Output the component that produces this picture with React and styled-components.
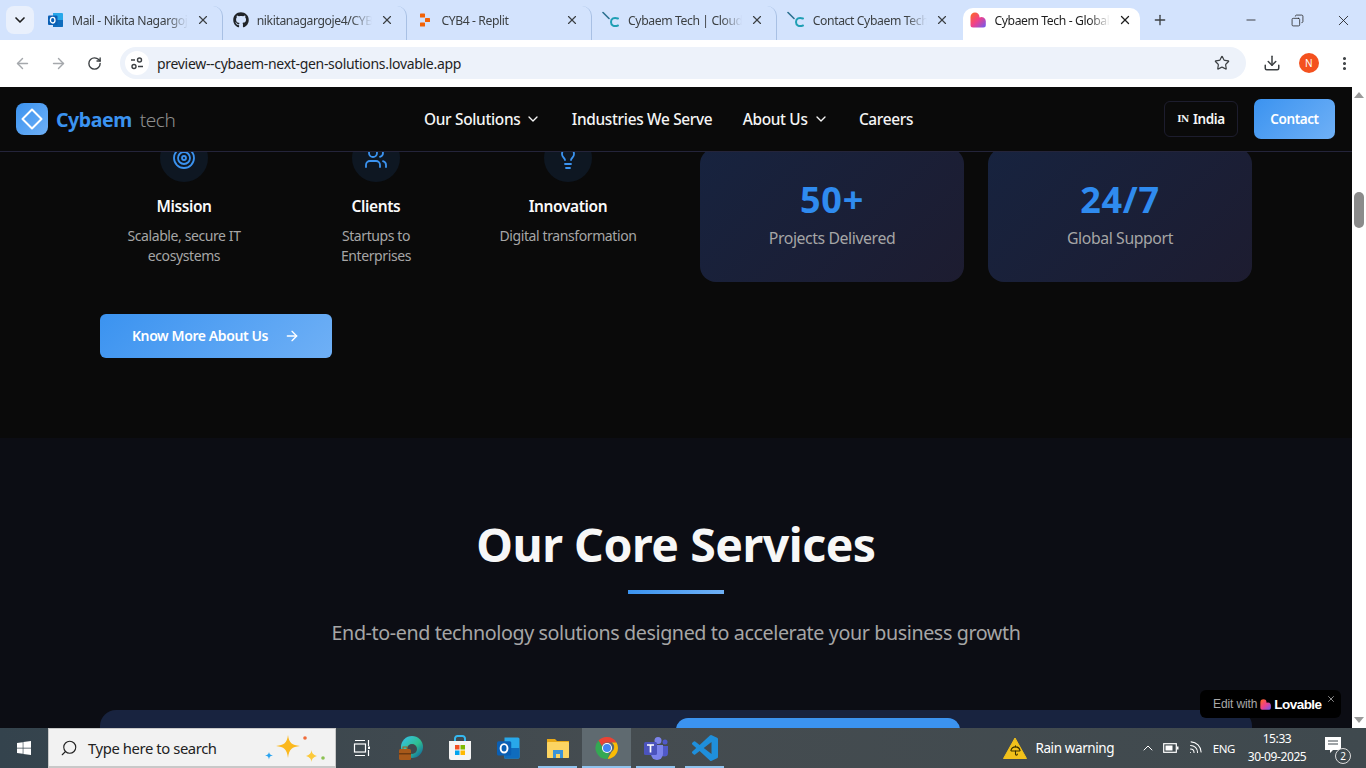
import React from 'react';
import styled, { createGlobalStyle } from 'styled-components';
import {
  ArrowLeft, ArrowRight, ChevronDown, ChevronUp, Copy, Download, Lightbulb, Minus,
  MoreVertical, Plus, RotateCw, Search, Star, Target, Umbrella, Users, Wifi, X,
} from 'lucide-react';
import { FaGithub, FaWindows } from 'react-icons/fa';

const SANS = '"Noto Sans", "Open Sans", sans-serif';

const GlobalStyle = createGlobalStyle`
  html, body { margin: 0; padding: 0; background: #0a0a0a; }
  body { font-family: ${SANS}; letter-spacing: -0.025em; }
  * { box-sizing: border-box; }
`;

const Screen = styled.div`
  width: 1366px;
  height: 768px;
  display: flex;
  flex-direction: column;
  overflow: hidden;
`;

/* browser chrome */
const TabStrip = styled.div`
  height: 40px;
  flex-shrink: 0;
  background: #d3e3fd;
  display: flex;
  align-items: flex-end;
  padding-left: 6px;
  color: #1f1f1f;
`;

const TabMenu = styled.div`
  width: 28px;
  height: 28px;
  margin: 0 4px 6px 0;
  border-radius: 8px;
  background: #e9f0fc;
  display: flex;
  align-items: center;
  justify-content: center;
`;

const Tab = styled.div`
  width: ${p => p.$active ? '177px' : '184.7px'};
  height: ${p => p.$active ? '32px' : '34px'};
  padding: ${p => p.$active ? '0 8px 8px 7px' : '0 12px 6px 10px'};
  margin: ${p => p.$active ? '0 0 0 2px' : '0'};
  border-radius: 10px 10px 0 0;
  background: ${p => p.$active ? '#fff' : 'transparent'};
  display: flex;
  align-items: center;
  gap: 8px;
  border-right: ${p => p.$sep ? '1px solid #a8c0e4' : 'none'};
`;

const TabTitle = styled.span`
  flex: 1;
  font-size: 12.2px;
  white-space: nowrap;
  overflow: hidden;
  color: ${p => p.$active ? '#1f1f1f' : '#3c4043'};
  mask-image: linear-gradient(to right, #000 82%, transparent 100%);
`;

const NewTab = styled.div`
  width: 40px;
  height: 34px;
  padding-bottom: 6px;
  display: flex;
  align-items: center;
  justify-content: center;
`;

const WindowButtons = styled.div`
  margin-left: auto;
  height: 40px;
  display: flex;
  align-items: center;
`;

const WindowButton = styled.div`
  width: 46px;
  display: flex;
  justify-content: center;
`;

const Toolbar = styled.div`
  height: 47px;
  flex-shrink: 0;
  background: #fff;
  display: flex;
  align-items: center;
  padding: 0 13px 1px 4px;
`;

const NavIcon = styled.div`
  width: 36px;
  display: flex;
  justify-content: center;
  color: ${p => p.$dim ? '#a5a8ac' : '#3c4043'};
`;

const AddressBar = styled.div`
  width: 1126px;
  height: 32px;
  margin: 0 8px 0 8px;
  padding: 0 16px 0 5px;
  border-radius: 16px;
  background: #edf2fa;
  display: flex;
  align-items: center;
  font-size: 14px;
  letter-spacing: -0.022em;
  color: #1f1f1f;
`;

const SiteInfo = styled.div`
  width: 24px;
  height: 24px;
  margin-right: 8px;
  border-radius: 50%;
  background: #fff;
  display: flex;
  align-items: center;
  justify-content: center;
`;

const Avatar = styled.div`
  width: 20px;
  height: 20px;
  border-radius: 50%;
  background: #f4511e;
  color: #fff;
  font-size: 10px;
  display: flex;
  align-items: center;
  justify-content: center;
`;

const ToolIcons = styled.div`
  flex: 1;
  display: flex;
  align-items: center;
  justify-content: space-between;
  padding: 0 0 0 9px;
  color: #3c4043;
`;

/* page */
const Viewport = styled.div`
  flex: 1;
  min-height: 0;
  display: flex;
`;

const Page = styled.div`
  flex: 1;
  min-width: 0;
  display: flex;
  flex-direction: column;
  position: relative;
`;

const Navbar = styled.header`
  height: 65px;
  flex-shrink: 0;
  background: #0a0a0a;
  border-bottom: 1px solid #24243a;
  display: flex;
  align-items: center;
  padding: 0 17px 0 16px;
`;

const Brand = styled.div`
  width: 408px;
  display: flex;
  align-items: center;
  gap: 8px;
`;

const LogoMark = styled.div`
  width: 32px;
  height: 32px;
  border-radius: 8px;
  background: linear-gradient(135deg, #3b93f0, #6fb0f6);
  display: flex;
  align-items: center;
  justify-content: center;
`;

const BrandName = styled.span`
  font-size: 19.5px;
  font-weight: 700;
  color: #3b93f0;
`;

const BrandSuffix = styled.span`
  font-size: 19px;
  font-weight: 300;
  color: #8f8f8f;
  margin-left: 4px;
`;

const NavLinks = styled.nav`
  display: flex;
  align-items: center;
  gap: 30.3px;
`;

const NavLink = styled.span`
  display: flex;
  align-items: center;
  gap: 5px;
  font-size: 15.4px;
  font-weight: 500;
  letter-spacing: -0.02em;
  color: #f5f5f5;
`;

const NavActions = styled.div`
  margin-left: auto;
  display: flex;
  align-items: center;
  gap: 16px;
`;

const RegionButton = styled.div`
  width: 74px;
  height: 36px;
  border: 1px solid #1d1d2e;
  border-radius: 6px;
  display: flex;
  align-items: center;
  justify-content: center;
  gap: 4px;
  color: #f5f5f5;
  font-size: 13.5px;
  font-weight: 600;
`;

const RegionCode = styled.span`
  font-family: "DejaVu Serif", serif;
  font-size: 9px;
  font-weight: 700;
`;

const ContactButton = styled.div`
  width: 81px;
  height: 40px;
  border-radius: 7px;
  background: linear-gradient(135deg, #3b93f0, #6fb0f6);
  color: #fff;
  font-size: 13.5px;
  font-weight: 600;
  display: flex;
  align-items: center;
  justify-content: center;
`;

const Scroller = styled.main`
  flex: 1;
  min-height: 0;
  overflow: hidden;
`;

const AboutSection = styled.section`
  margin-top: -18px;
  padding: 0 100px 80px;
  background: #0a0a0a;
`;

const AboutGrid = styled.div`
  display: grid;
  grid-template-columns: 1fr 1fr;
  gap: 48px;
`;

const Features = styled.div`
  display: grid;
  grid-template-columns: repeat(3, 1fr);
  gap: 24px;
`;

const Feature = styled.div`
  display: flex;
  flex-direction: column;
  align-items: center;
  text-align: center;
`;

const FeatureIcon = styled.div`
  width: 48px;
  height: 48px;
  border-radius: 50%;
  background: #0e1722;
  color: #3b93f0;
  display: flex;
  align-items: center;
  justify-content: center;
`;

const FeatureTitle = styled.h3`
  margin: 12px 0 8px;
  font-size: 15.5px;
  line-height: 24px;
  font-weight: 600;
  color: #fafafa;
`;

const FeatureText = styled.p`
  margin: 0;
  font-size: 14px;
  line-height: 20px;
  color: #a6a6a6;
`;

const Stats = styled.div`
  padding-top: 14px;
  display: grid;
  grid-template-columns: 1fr 1fr;
  gap: 24px;
`;

const StatCard = styled.div`
  height: 134px;
  border-radius: 16px;
  background: linear-gradient(135deg, #17233f, #1d1c30);
  display: flex;
  flex-direction: column;
  align-items: center;
  padding-top: 30px;
`;

const StatValue = styled.div`
  font-size: 36px;
  line-height: 44px;
  font-weight: 700;
  color: #2f8bef;
  letter-spacing: 0.02em;
`;

const StatLabel = styled.div`
  margin-top: 4px;
  font-size: 15.8px;
  line-height: 24px;
  color: #a6a6a6;
`;

const MoreButton = styled.div`
  margin-top: 32px;
  width: 232px;
  height: 44px;
  padding-bottom: 1px;
  border-radius: 6px;
  background: linear-gradient(135deg, #3b93f0, #6fb0f6);
  color: #fff;
  font-size: 14px;
  font-weight: 600;
  display: flex;
  align-items: center;
  justify-content: center;
  gap: 16px;
`;

const ServicesSection = styled.section`
  background: #0c0d14;
  padding: 78px 100px 40px;
  display: flex;
  flex-direction: column;
  align-items: center;
`;

const SectionTitle = styled.h2`
  margin: 0;
  font-size: 46.4px;
  line-height: 56px;
  font-weight: 700;
  color: #f7f7f7;
  letter-spacing: -0.01em;
`;

const TitleRule = styled.div`
  width: 96px;
  height: 4px;
  margin-top: 18px;
  background: linear-gradient(90deg, #3b93f0, #6fb0f6);
`;

const SectionLead = styled.p`
  margin: 25px 0 0;
  font-size: 19.72px;
  line-height: 28px;
  color: #a6a6a6;
`;

const ServiceTabs = styled.div`
  margin-top: 63px;
  width: 100%;
  padding: 8px;
  border-radius: 16px;
  background: #18233f;
  display: grid;
  grid-template-columns: repeat(4, 1fr);
`;

const ServiceTab = styled.div`
  height: 56px;
  border-radius: 12px;
  background: ${p => p.$active ? '#3b93f0' : 'transparent'};
`;

const LovableBadge = styled.div`
  position: absolute;
  right: 11px;
  bottom: 10px;
  width: 141px;
  height: 28px;
  border-radius: 6px;
  background: #000;
  display: flex;
  align-items: center;
  padding-left: 13px;
  gap: 3px;
  font-family: "Liberation Sans", sans-serif;
  letter-spacing: -0.01em;
  font-size: 12px;
  color: #a8a8a8;
`;

const LovableName = styled.span`
  font-size: 13.5px;
  font-weight: 700;
  color: #fff;
  letter-spacing: -0.04em;
`;

const BadgeClose = styled.span`
  position: absolute;
  top: 4px;
  right: 5px;
  display: flex;
  color: #a8a8a8;
`;

const Scrollbar = styled.div`
  width: 14px;
  flex-shrink: 0;
  background: #fff;
  display: flex;
  flex-direction: column;
  align-items: center;
  padding: 5px 0;
`;

const ScrollThumb = styled.div`
  width: 10px;
  height: 36px;
  margin-top: 94px;
  border-radius: 5px;
  background: #8b8b8b;
`;

const ScrollArrow = styled.div`
  width: 0;
  height: 0;
  border-left: 5px solid transparent;
  border-right: 5px solid transparent;
  ${p => p.$down
    ? 'border-top: 6px solid #9a9a9a; margin-top: auto;'
    : 'border-bottom: 6px solid #9a9a9a;'}
`;

/* windows taskbar */
const Taskbar = styled.footer`
  height: 40px;
  flex-shrink: 0;
  background: linear-gradient(90deg, #34434d, #454c50 45%, #3f494e);
  display: flex;
  align-items: center;
  color: #fff;
`;

const StartButton = styled.div`
  width: 48px;
  display: flex;
  justify-content: center;
`;

const SearchBox = styled.div`
  width: 288px;
  height: 40px;
  background: #f2f2f2;
  border: 1px solid #c8c8c8;
  border-bottom-width: 2px;
  display: flex;
  align-items: center;
  padding-left: 11px;
  gap: 10px;
  color: #222;
  font-size: 14.8px;
`;

const SearchArt = styled.div`
  margin-left: auto;
  margin-right: 8px;
  display: flex;
`;

const TaskIcons = styled.div`
  display: flex;
  margin-left: 1px;
`;

const TaskIcon = styled.div`
  width: 49px;
  height: 40px;
  display: flex;
  align-items: center;
  justify-content: center;
  position: relative;
  background: ${p => p.$active ? '#5f6a70' : 'transparent'};

  &::after {
    content: '';
    position: absolute;
    left: ${p => p.$active ? '0' : '5px'};
    right: ${p => p.$active ? '0' : '5px'};
    bottom: 0;
    height: 2px;
    background: ${p => p.$open ? '#8fc3ee' : 'transparent'};
  }
`;

const Tray = styled.div`
  margin-left: auto;
  display: flex;
  align-items: center;
  height: 40px;
  padding-right: 18px;
`;

const Weather = styled.div`
  display: flex;
  align-items: center;
  gap: 8px;
  font-size: 13.5px;
  margin-right: 22px;
`;

const WarningIcon = styled.div`
  width: 24px;
  height: 22px;
  position: relative;
  display: flex;
  align-items: flex-end;
  justify-content: center;
  padding-bottom: 3px;
`;

const WarningShape = styled.svg`
  position: absolute;
  inset: 0;
`;

const TrayIcon = styled.div`
  width: 23.5px;
  display: flex;
  justify-content: center;
`;

const TrayText = styled.span`
  font-size: 11.5px;
  margin: 0 10px 0 6px;
`;

const Clock = styled.div`
  width: 64px;
  text-align: center;
  font-size: 12px;
  line-height: 18px;
`;

const Notice = styled.div`
  margin-left: 15px;
  width: 24px;
  height: 24px;
  position: relative;
`;

const NoticeCount = styled.span`
  position: absolute;
  right: -3px;
  bottom: -4px;
  width: 16px;
  height: 16px;
  border-radius: 50%;
  border: 1px solid #ddd;
  background: #3f494e;
  font-size: 10px;
  line-height: 14px;
  text-align: center;
`;

const OutlookIcon = ({ size = 16 }) => (
  <svg width={size} height={size} viewBox="0 0 16 16">
    <path d="M5 1h9a1 1 0 0 1 1 1v12a1 1 0 0 1-1 1H5z" fill="#28a8ea" />
    <path d="M5 8h10v6a1 1 0 0 1-1 1H5z" fill="#0f6cbd" />
    <rect x="0" y="3.5" width="9.5" height="9.5" rx="1" fill="#0a5fb4" />
    <ellipse cx="4.7" cy="8.2" rx="2.3" ry="2.8" fill="none" stroke="#fff" strokeWidth="1.3" />
  </svg>
);

const ReplitIcon = () => (
  <svg width="16" height="16" viewBox="0 0 16 16" fill="#f26207">
    <rect x="3" y="1.5" width="5" height="4" rx=".6" />
    <rect x="8" y="6" width="5" height="4" rx=".6" />
    <rect x="3" y="10.5" width="5" height="4" rx=".6" />
  </svg>
);

const CybaemIcon = () => (
  <svg width="18" height="18" viewBox="0 0 18 18" fill="none" strokeLinecap="round">
    <path d="M1 1.500l6 6" stroke="#2b6f8f" strokeWidth="1.6" />
    <path d="M16 7.500c-4-1.500-7 0-7 3.500s3 5 7 3.500" stroke="#1f9fb4" strokeWidth="2" />
  </svg>
);

const LovableIcon = ({ size = 16, id }) => (
  <svg width={size} height={size} viewBox="0 0 16 16">
    <defs>
      <linearGradient id={id} x1="0" y1="0" x2="1" y2="1">
        <stop offset="0" stopColor="#ff6a1f" />
        <stop offset=".5" stopColor="#f0408a" />
        <stop offset="1" stopColor="#6a5cf5" />
      </linearGradient>
    </defs>
    <path d="M5 .5a4.5 4.5 0 0 1 4.5 4.500v.6A4.200 4.200 0 0 1 15.800 9v4a2.500 2.500 0 0 1-2.500 2.500H3A2.500 2.500 0 0 1 .5 13V5A4.500 4.500 0 0 1 5 .5z" fill={`url(#${id})`} />
  </svg>
);

const SiteInfoIcon = () => (
  <svg width="14" height="14" viewBox="0 0 14 14" fill="none" stroke="#3c4043" strokeWidth="1.4">
    <path d="M1 4h4M8 10.500h5" />
    <circle cx="9.500" cy="4" r="2" />
    <circle cx="4" cy="10.500" r="2" />
  </svg>
);

const TaskViewIcon = () => (
  <svg width="18" height="18" viewBox="0 0 18 18" fill="none" stroke="#fff" strokeWidth="1.2">
    <path d="M2 1.500h10M2 16.500h10M15.500 1v6M15.500 11v6" />
    <rect x="1.500" y="5" width="11" height="8" />
    <rect x="15" y="7.500" width="2" height="2.500" fill="#fff" stroke="none" />
  </svg>
);

const EdgeIcon = () => (
  <svg width="26" height="26" viewBox="0 0 26 26">
    <defs>
      <linearGradient id="edge-a" x1="0" y1="0" x2="1" y2="1">
        <stop offset="0" stopColor="#35c1f1" />
        <stop offset=".55" stopColor="#2fbf8f" />
        <stop offset="1" stopColor="#0c59a4" />
      </linearGradient>
    </defs>
    <circle cx="14" cy="12" r="11" fill="url(#edge-a)" />
    <circle cx="14" cy="14" r="5" fill="#3f494e" />
    <rect x="1" y="14" width="12" height="11" rx="1.500" fill="#a8591a" />
    <rect x="1" y="18" width="12" height="1.500" fill="#6e3a10" />
    <rect x="5" y="12" width="4" height="2.500" fill="none" stroke="#a8591a" />
  </svg>
);

const StoreIcon = () => (
  <svg width="24" height="26" viewBox="0 0 24 26">
    <path d="M7 6V3.500A2.500 2.500 0 0 1 9.500 1h5A2.500 2.500 0 0 1 17 3.500V6" fill="none" stroke="#35b8f0" strokeWidth="2" />
    <path d="M1 6h22v17a2 2 0 0 1-2 2H3a2 2 0 0 1-2-2z" fill="#f4f4f4" />
    <rect x="7" y="10" width="4.500" height="4.500" fill="#f25022" />
    <rect x="12.500" y="10" width="4.500" height="4.500" fill="#7fba00" />
    <rect x="7" y="15.500" width="4.500" height="4.500" fill="#00a4ef" />
    <rect x="12.500" y="15.500" width="4.500" height="4.500" fill="#ffb900" />
  </svg>
);

const FolderIcon = () => (
  <svg width="24" height="24" viewBox="0 0 24 24">
    <path d="M1 3h8l2 2h12v16a1 1 0 0 1-1 1H2a1 1 0 0 1-1-1z" fill="#e8a917" />
    <rect x="1" y="6" width="22" height="16" rx="1" fill="#fcd462" />
    <path d="M7 14h10v8h-3v-4h-4v4H7z" fill="#3b93d8" />
  </svg>
);

const ChromeIcon = () => (
  <svg width="24" height="24" viewBox="0 0 24 24">
    <path d="M12 1a11 11 0 0 1 9.530 5.500H12a5.500 5.500 0 0 0-5.200 3.700L3.500 4.500A11 11 0 0 1 12 1z" fill="#ea4335" />
    <path d="M21.530 6.500A11 11 0 0 1 12.500 23l4.200-7.300a5.500 5.500 0 0 0 0-9.200z" fill="#fbbc04" />
    <path d="M12.500 23A11 11 0 0 1 3.500 4.500l4.700 8.200a5.500 5.500 0 0 0 6 4.300z" fill="#34a853" />
    <circle cx="12" cy="12" r="5" fill="#fff" />
    <circle cx="12" cy="12" r="4" fill="#4285f4" />
  </svg>
);

const TeamsIcon = () => (
  <svg width="26" height="24" viewBox="0 0 26 24">
    <circle cx="15" cy="4.500" r="3.500" fill="#7b83eb" />
    <circle cx="22" cy="6" r="2.500" fill="#5059c9" />
    <path d="M18 10h7v7a3.500 3.500 0 0 1-7 0z" fill="#5059c9" />
    <path d="M8 9h12v9a6 6 0 0 1-12 0z" fill="#7b83eb" />
    <rect x="1" y="6" width="13" height="13" rx="1.500" fill="#4b53bc" />
    <path d="M4 9h7M7.500 9v7.500" stroke="#fff" strokeWidth="1.700" fill="none" />
  </svg>
);

const VsCodeIcon = () => (
  <svg width="26" height="26" viewBox="0 0 24 24">
    <path fill="#1f8fdb" d="M23.150 2.587L18.210.21a1.494 1.494 0 0 0-1.705.29l-9.460 8.630-4.120-3.128a.999.999 0 0 0-1.276.057L.327 7.261A1 1 0 0 0 .326 8.740L3.899 12 .326 15.260a1 1 0 0 0 .001 1.479L1.650 17.940a.999.999 0 0 0 1.276.057l4.120-3.128 9.460 8.630a1.492 1.492 0 0 0 1.704.29l4.942-2.377A1.500 1.500 0 0 0 24 20.060V3.939a1.500 1.500 0 0 0-.850-1.352zm-5.146 14.861L10.826 12l7.178-5.448v10.896z" />
  </svg>
);

const Sparkles = () => (
  <svg width="64" height="30" viewBox="0 0 64 30">
    <path d="M25 2c1 8 4 10 12 11-8 1-11 3-12 12-1-9-4-11-12-12 8-1 11-3 12-11z" fill="#fbb81e" />
    <path d="M48.500 17c.5 3.500 1.500 4.500 5.500 6-4 1.500-5 2.500-5.500 6-.5-3.500-1.500-4.500-5.500-6 4-1.500 5-2.500 5.500-6z" fill="#fcc93a" />
    <path d="M6 19c.4 2 1 3 4 3.500-3 .5-3.600 1.500-4 4-.4-2.500-1-3.500-4-4 3-.5 3.600-1.500 4-3.500z" fill="#2aa3ef" />
    <circle cx="42" cy="5" r="1.800" fill="#ef6c3a" />
    <circle cx="60" cy="25" r="1.800" fill="#8cc152" />
  </svg>
);

const BatteryIcon = () => (
  <svg width="16" height="12" viewBox="0 0 16 12" fill="none">
    <rect x=".7" y="1.700" width="12.600" height="8.600" stroke="#fff" strokeWidth="1.200" />
    <rect x="2.500" y="3.500" width="7" height="5" fill="#fff" />
    <rect x="14" y="4.500" width="1.500" height="3" fill="#fff" />
  </svg>
);

const NoticeIcon = () => (
  <svg width="18" height="18" viewBox="0 0 18 18">
    <path d="M1 1h16v13H9l-3 3v-3H1z" fill="#fff" />
    <path d="M4 5h10M4 8h10" stroke="#3f494e" strokeWidth="1" />
  </svg>
);

const tabs = [
  { title: 'Mail - Nikita Nagargoje', icon: <OutlookIcon />, sep: true },
  { title: 'nikitanagargoje4/CYB4', icon: <FaGithub size={16} color="#1f2328" />, sep: true },
  { title: 'CYB4 - Replit', icon: <ReplitIcon />, sep: true },
  { title: 'Cybaem Tech | Cloud,', icon: <CybaemIcon />, sep: true },
  { title: 'Contact Cybaem Tech', icon: <CybaemIcon /> },
];

const features = [
  { title: 'Mission', text: <>Scalable, secure IT<br />ecosystems</>, Icon: Target },
  { title: 'Clients', text: <>Startups to<br />Enterprises</>, Icon: Users },
  { title: 'Innovation', text: 'Digital transformation', Icon: Lightbulb },
];

const stats = [
  { value: '50+', label: 'Projects Delivered' },
  { value: '24/7', label: 'Global Support' },
];

const navLinks = [
  { label: 'Our Solutions', menu: true },
  { label: 'Industries We Serve' },
  { label: 'About Us', menu: true },
  { label: 'Careers' },
];

const taskIcons = [
  { el: <TaskViewIcon /> },
  { el: <EdgeIcon /> },
  { el: <StoreIcon /> },
  { el: <OutlookIcon size={24} /> },
  { el: <FolderIcon />, open: true },
  { el: <ChromeIcon />, open: true, active: true },
  { el: <TeamsIcon />, open: true },
  { el: <VsCodeIcon />, open: true },
];

export default function App() {
  return (
    <>
      <GlobalStyle />
      <Screen>
        <TabStrip>
          <TabMenu><ChevronDown size={16} strokeWidth={2.5} /></TabMenu>
          {tabs.map(t => (
            <Tab key={t.title} $sep={t.sep}>
              {t.icon}
              <TabTitle>{t.title}</TabTitle>
              <X size={14} color="#3c4043" strokeWidth={2} />
            </Tab>
          ))}
          <Tab $active>
            <LovableIcon id="lovable-tab" />
            <TabTitle $active>Cybaem Tech - Global</TabTitle>
            <X size={14} color="#1f1f1f" strokeWidth={2.2} />
          </Tab>
          <NewTab><Plus size={16} color="#3c4043" /></NewTab>
          <WindowButtons>
            <WindowButton><Minus size={14} strokeWidth={1.4} /></WindowButton>
            <WindowButton><Copy size={13} strokeWidth={1.4} style={{ transform: 'scaleX(-1)' }} /></WindowButton>
            <WindowButton><X size={17} strokeWidth={1.2} /></WindowButton>
          </WindowButtons>
        </TabStrip>

        <Toolbar>
          <NavIcon $dim><ArrowLeft size={17} /></NavIcon>
          <NavIcon $dim><ArrowRight size={17} /></NavIcon>
          <NavIcon><RotateCw size={15} strokeWidth={2.2} /></NavIcon>
          <AddressBar>
            <SiteInfo><SiteInfoIcon /></SiteInfo>
            preview--cybaem-next-gen-solutions.lovable.app
            <Star size={16} strokeWidth={1.8} color="#3c4043" style={{ marginLeft: 'auto' }} />
          </AddressBar>
          <ToolIcons>
            <Download size={18} />
            <Avatar>N</Avatar>
            <MoreVertical size={17} strokeWidth={2.4} />
          </ToolIcons>
        </Toolbar>

        <Viewport>
          <Page>
            <Navbar>
              <Brand>
                <LogoMark>
                  <svg width="24" height="24" viewBox="0 0 24 24" fill="none" stroke="#fff" strokeWidth="2">
                    <path d="M12 2.500 21.500 12 12 21.500 2.500 12z" strokeLinejoin="round" />
                  </svg>
                </LogoMark>
                <span>
                  <BrandName>Cybaem</BrandName>{' '}
                  <BrandSuffix>tech</BrandSuffix>
                </span>
              </Brand>
              <NavLinks>
                {navLinks.map(l => (
                  <NavLink key={l.label}>
                    {l.label}
                    {l.menu && <ChevronDown size={16} />}
                  </NavLink>
                ))}
              </NavLinks>
              <NavActions>
                <RegionButton><RegionCode>IN</RegionCode> India</RegionButton>
                <ContactButton>Contact</ContactButton>
              </NavActions>
            </Navbar>

            <Scroller>
              <AboutSection>
                <AboutGrid>
                  <Features>
                    {features.map(({ title, text, Icon }) => (
                      <Feature key={title}>
                        <FeatureIcon><Icon size={24} strokeWidth={1.8} /></FeatureIcon>
                        <FeatureTitle>{title}</FeatureTitle>
                        <FeatureText>{text}</FeatureText>
                      </Feature>
                    ))}
                  </Features>
                  <Stats>
                    {stats.map(s => (
                      <StatCard key={s.label}>
                        <StatValue>{s.value}</StatValue>
                        <StatLabel>{s.label}</StatLabel>
                      </StatCard>
                    ))}
                  </Stats>
                </AboutGrid>
                <MoreButton>Know More About Us <ArrowRight size={16} /></MoreButton>
              </AboutSection>

              <ServicesSection>
                <SectionTitle>Our Core Services</SectionTitle>
                <TitleRule />
                <SectionLead>End-to-end technology solutions designed to accelerate your business growth</SectionLead>
                <ServiceTabs>
                  <ServiceTab />
                  <ServiceTab />
                  <ServiceTab $active />
                  <ServiceTab />
                </ServiceTabs>
              </ServicesSection>
            </Scroller>

            <LovableBadge>
              Edit with
              <LovableIcon size={11} id="lovable-badge" />
              <LovableName>Lovable</LovableName>
              <BadgeClose><X size={10} /></BadgeClose>
            </LovableBadge>
          </Page>
          <Scrollbar>
            <ScrollArrow />
            <ScrollThumb />
            <ScrollArrow $down />
          </Scrollbar>
        </Viewport>

        <Taskbar>
          <StartButton><FaWindows size={16} /></StartButton>
          <SearchBox>
            <Search size={18} strokeWidth={1.5} style={{ transform: 'scaleX(-1)' }} />
            Type here to search
            <SearchArt><Sparkles /></SearchArt>
          </SearchBox>
          <TaskIcons>
            {taskIcons.map((t, i) => (
              <TaskIcon key={i} $open={t.open} $active={t.active}>{t.el}</TaskIcon>
            ))}
          </TaskIcons>
          <Tray>
            <Weather>
              <WarningIcon>
                <WarningShape width="24" height="22" viewBox="0 0 24 22">
                  <path d="M12 1 23.500 21.500H.5z" fill="#f2c21b" stroke="#f2c21b" strokeLinejoin="round" />
                </WarningShape>
                <Umbrella size={11} color="#3a3000" strokeWidth={2.4} style={{ position: 'relative' }} />
              </WarningIcon>
              Rain warning
            </Weather>
            <TrayIcon><ChevronUp size={16} strokeWidth={1.5} /></TrayIcon>
            <TrayIcon><BatteryIcon /></TrayIcon>
            <TrayIcon><Wifi size={17} strokeWidth={1.5} style={{ transform: 'rotate(45deg)' }} /></TrayIcon>
            <TrayText>ENG</TrayText>
            <Clock>15:33<br />30-09-2025</Clock>
            <Notice>
              <NoticeIcon />
              <NoticeCount>2</NoticeCount>
            </Notice>
          </Tray>
        </Taskbar>
      </Screen>
    </>
  );
}
